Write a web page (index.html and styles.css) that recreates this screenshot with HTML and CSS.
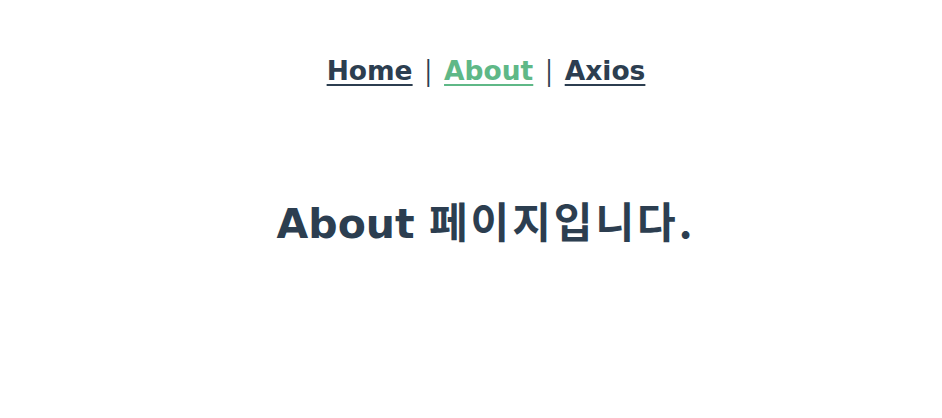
FILE: index.html
```html
<!DOCTYPE html>
<html lang="ko">
<head>
<meta charset="utf-8">
<title>About</title>
<link rel="stylesheet" href="styles.css">
</head>
<body>
<div id="app" class="app">
  <nav class="nav">
    <a href="#/" class="nav-link">Home</a> <span class="sep">|</span>
    <a href="#/about" class="nav-link active">About</a> <span class="sep">|</span>
    <a href="#/axios" class="nav-link">Axios</a>
  </nav>
  <div class="about">
    <h1 class="title"><span class="en">About</span> <span class="ko">페이지입니다.</span></h1>
  </div>
</div>
</body>
</html>
```
FILE: styles.css
```css
html, body {
  margin: 0;
  padding: 0;
  background: #ffffff;
}
.app {
  font-family: "DejaVu Sans", "Noto Sans CJK KR", sans-serif;
  color: #2c3e50;
  text-align: center;
  padding-left: 30px;
  -webkit-font-smoothing: antialiased;
}
.nav {
  padding: 50px 0 0;
  font-size: 26.5px;
  line-height: 40px;
}
.nav-link {
  font-weight: 700;
  color: #2c3e50;
  text-decoration: underline;
  text-decoration-thickness: 2px;
  text-underline-offset: 4px;
}
.nav-link.active {
  color: #5fb887;
}
.sep {
  font-family: "Open Sans", sans-serif;
  font-weight: 400;
  color: #2c3e50;
}
.title {
  margin: 104px 0 0;
  font-size: 41px;
  line-height: 50px;
  font-weight: 700;
}
.ko {
  font-family: "Noto Sans CJK KR", sans-serif;
  font-size: 42px;
  letter-spacing: 3px;
}
```
